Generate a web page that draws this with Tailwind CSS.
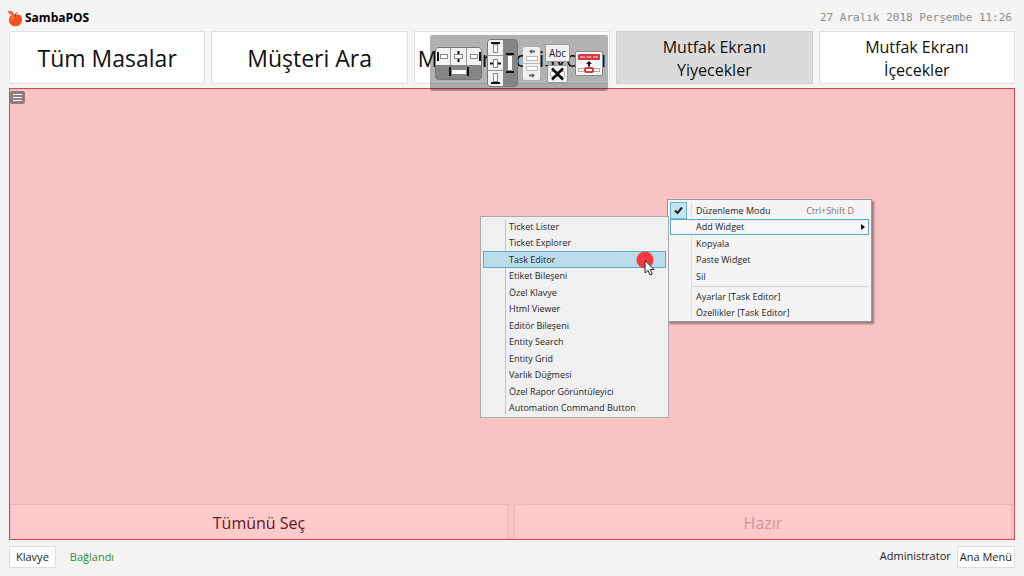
<!DOCTYPE html>
<html lang="tr">

<head>
  <meta charset="utf-8">
  <meta name="viewport" content="width=device-width, initial-scale=1">
  <title>SambaPOS</title>
  <script src="https://cdn.jsdelivr.net/npm/@tailwindcss/browser@4"></script>
</head>

<body class="relative flex flex-col min-h-screen px-[9px] bg-[#f4f4f4] text-[#1e1e1e] font-['Open_Sans','Noto_Sans',sans-serif]">

  <header class="flex items-center justify-between h-[31px] pt-[5px] pr-[3px]">
    <h1 class="flex items-center gap-px text-[12px] font-bold text-black">
      <svg class="-ml-0.5 size-[17px]" viewBox="0 0 17 17" aria-hidden="true">
        <path d="M8 5.200C10 3.800 15 4 15 9.300C15 13.500 12.300 16.300 8.700 16.300S2 13.800 2 9.700C2 6.300 4.400 4.300 8 5.200Z" fill="#f4511e" />
        <path d="M4 7.500C5.500 6 7.200 6.500 7.500 7.600C6 8 4.500 9.300 4 11Z" fill="#ff8a50" />
        <path d="M.8 1C3.500.2 6.800 1.200 7.400 4.900C4.500 6 1.800 4.600.8 1Z" fill="#f0683c" />
        <path d="M8 6.500C8 4.500 9 3 10.200 2.300" fill="none" stroke="#8a2c12" />
      </svg>
      SambaPOS
    </h1>
    <time datetime="2018-12-27T11:26" class="font-['DejaVu_Sans_Mono',monospace] text-[11px] text-[#8c8c8c]">27 Aralık 2018 Perşembe 11:26</time>
  </header>

  <nav class="grid grid-cols-5 gap-[6px] h-[53px] text-[23px] leading-[23px] text-[#111]">
    <button class="pt-[2px] bg-white border border-[#e2e2e2]">Tüm Masalar</button>
    <button class="pt-[2px] bg-white border border-[#e2e2e2]">Müşteri Ara</button>
    <button class="pt-[2px] bg-white border border-[#e2e2e2] text-[22px] whitespace-nowrap">Müşteri Pozisyonu</button>
    <button class="pt-[2px] bg-[#dbdbdb] border border-[#cfcfcf] text-[16px]">Mutfak Ekranı<br>Yiyecekler</button>
    <button class="pt-[2px] bg-white border border-[#e2e2e2] text-[16px]">Mutfak Ekranı<br>İçecekler</button>
  </nav>

  <main class="flex flex-col flex-1 justify-between mt-1 bg-[#f7c3c3] border border-[#cf4a50]">
    <button aria-label="Menü" class="flex items-center justify-center mt-[2px] w-[15px] h-[13px] rounded-xs bg-[#8f7c7c]">
      <svg class="w-[11px] h-[9px]" viewBox="0 0 11 9" stroke="#fff" stroke-width="1"><path d="M1 1.500H10M1 4.500H10M1 7.500H10" /></svg>
    </button>
    <div class="grid grid-cols-2 gap-[6px] h-[35px] pr-[2px] text-[16px]">
      <button class="pt-[2px] bg-[#ffcaca] border border-b-0 border-[#efb5b5] text-[#5a1c22]">Tümünü Seç</button>
      <button class="pt-[2px] bg-[#ffcaca] border border-b-0 border-[#efb5b5] text-[#cf9496]">Hazır</button>
    </div>
  </main>

  <footer class="flex items-center h-[36px] pb-[3px] text-[11px]">
    <button class="h-[22px] px-[6px] pt-[2px] bg-white border border-[#dcdcdc]">Klavye</button>
    <span class="ml-[14px] pt-[2px] text-[#2f8f37]">Bağlandı</span>
    <span class="ml-auto mr-[6px]">Administrator</span>
    <button class="h-[22px] px-[2px] pt-[2px] bg-white border border-[#dcdcdc]">Ana Menü</button>
  </footer>

  <!-- Floating layout toolbar -->
  <div role="toolbar" class="absolute left-[430px] top-[35px] flex items-center gap-[5px] h-[56px] px-[5px] rounded-xs bg-black/30">
    <div class="w-[47px] rounded-sm overflow-hidden bg-[#858585] border border-[#777]">
      <div class="grid grid-cols-3 gap-px h-[17px] bg-[#999]">
        <button aria-label="Sola hizala" class="bg-[#f3f3f3]"><svg class="mx-auto size-[15px]" viewBox="0 0 15 15" fill="#fff"><path d="M2 3V12" stroke="#111" stroke-width="2" /><rect x="4.500" y="5.500" width="7" height="4" stroke="#888" /></svg></button>
        <button aria-label="Yatay ortala" class="bg-[#f3f3f3]"><svg class="mx-auto size-[15px]" viewBox="0 0 15 15" fill="#fff"><path d="M7.500 2V13" stroke="#111" stroke-width="2" /><rect x="3.500" y="5.500" width="8" height="4" stroke="#888" /></svg></button>
        <button aria-label="Sağa hizala" class="bg-[#f3f3f3]"><svg class="mx-auto size-[15px]" viewBox="0 0 15 15" fill="#fff"><path d="M13 3V12" stroke="#111" stroke-width="2" /><rect x="3.500" y="5.500" width="7" height="4" stroke="#888" /></svg></button>
      </div>
      <button aria-label="Genişliği eşitle" class="block w-full h-[14px]"><svg class="mx-auto w-[22px] h-[11px]" viewBox="0 0 22 11"><path d="M2 1V10M20 1V10" stroke="#111" stroke-width="2" /><rect x="4" y="4" width="14" height="4" fill="#fff" /></svg></button>
    </div>
    <div class="flex w-[31px] h-[48px] rounded-sm overflow-hidden bg-[#858585] border border-[#777]">
      <div class="grid grid-rows-3 gap-px w-[15px] bg-[#999]">
        <button aria-label="Üste hizala" class="bg-[#f3f3f3]"><svg class="size-[15px]" viewBox="0 0 15 15" fill="#fff"><path d="M3 3H12" stroke="#111" stroke-width="2" /><rect x="5.500" y="4.500" width="4" height="8" stroke="#888" /></svg></button>
        <button aria-label="Dikey ortala" class="bg-[#f3f3f3]"><svg class="size-[15px]" viewBox="0 0 15 15" fill="#fff"><path d="M2 7.500H13" stroke="#111" stroke-width="2" /><rect x="5.500" y="3.500" width="4" height="8" stroke="#888" /></svg></button>
        <button aria-label="Alta hizala" class="bg-[#f3f3f3]"><svg class="size-[15px]" viewBox="0 0 15 15" fill="#fff"><path d="M3 12H12" stroke="#111" stroke-width="2" /><rect x="5.500" y="2.500" width="4" height="8" stroke="#888" /></svg></button>
      </div>
      <button aria-label="Yüksekliği eşitle" class="flex-1"><svg class="mx-auto w-[10px] h-[22px]" viewBox="0 0 10 22"><path d="M1 2H9M1 20H9" stroke="#111" stroke-width="2" /><rect x="3" y="4" width="4" height="14" fill="#fff" /></svg></button>
    </div>
    <div class="grid gap-px w-[17px] h-[33px] rounded-xs overflow-hidden bg-[#bbb]">
      <button aria-label="Sola taşı" class="bg-[#f0f0f0]"><svg class="w-[17px] h-[16px]" viewBox="0 0 17 16"><path d="M6 4.500L9 2V3.500H12V5.500H9V7Z" fill="#666" /><rect x="3.500" y="9.500" width="11" height="4" fill="#fff" stroke="#bbb" /></svg></button>
      <button aria-label="Sağa taşı" class="bg-[#f0f0f0]"><svg class="w-[17px] h-[16px]" viewBox="0 0 17 16"><rect x="3.500" y="2.500" width="11" height="4" fill="#fff" stroke="#bbb" /><path d="M12 11.500L9 9V10.500H6V12.500H9V14Z" fill="#666" /></svg></button>
    </div>
    <div class="flex flex-col items-center gap-[3px]">
      <button class="w-[25px] h-[18px] rounded-xs bg-[#f1f1f1] border border-[#999] text-[10px] leading-[16px]">Abc</button>
      <button aria-label="Boyutu sıfırla" class="w-[21px] h-[18px] rounded-xs bg-[#f1f1f1] border border-[#999]"><svg class="w-[19px] h-[16px]" viewBox="0 0 19 16"><rect x="2.500" y="5.500" width="14" height="5" rx="1" fill="#fff" stroke="#aaa" /><path d="M4 2.500L15 13.500M15 2.500L4 13.500" stroke="#111" stroke-width="2.500" /></svg></button>
    </div>
    <button aria-label="Satırı birleştir" class="w-[28px] h-[25px] rounded-xs bg-[#f6f6f6] border border-[#888]"><svg class="w-[26px] h-[23px]" viewBox="0 0 26 23">
        <rect x="2" y="2" width="22" height="6" rx="1" fill="#d83a40" />
        <path d="M4 5H9M10.500 5H15.500M17 5H22" stroke="#fff" stroke-width="1.500" stroke-opacity=".6" />
        <path d="M13 9L16 12H14V14.500H12V12H10Z" fill="#111" />
        <rect x="2.500" y="16.500" width="21" height="3" fill="#fff" stroke="#aaa" />
        <rect x="9" y="16" width="8" height="4" rx="1.500" fill="#fff" stroke="#d83a40" stroke-width="2" />
      </svg></button>
  </div>

  <!-- Context menu -->
  <div role="menu" class="absolute left-[667px] top-[199px] w-[205px] px-[2px] pt-[2px] bg-[#f4f4f4] border border-[#999] shadow-[2px_2px_2px_#00000060] text-[9px]">
    <div class="absolute left-[23px] inset-y-[2px] w-px bg-[#dedede]"></div>
    <div class="relative grid grid-rows-5 h-[83px]">
      <label class="flex items-center pr-[15px]">
        <input type="checkbox" checked class="appearance-none w-[17px] h-full bg-[#c4e2ef] border border-[#6cb4d4]">
        <svg class="-ml-[13px] mr-[13px] size-[9px]" viewBox="0 0 9 9" fill="none" stroke="#222" stroke-width="2"><path d="M1 4.500L3.500 7L8 1.500" /></svg>
        Düzenleme Modu
        <span class="ml-auto text-[#777]">Ctrl+Shift D</span>
      </label>
      <button role="menuitem" aria-haspopup="true" class="flex items-center justify-between pl-[25px] pr-[3px] border border-[#5aaccc] bg-[#f6f6f6]">
        Add Widget
        <svg class="w-[4px] h-[6px]" viewBox="0 0 4 6"><path d="M0 0L4 3L0 6Z" fill="#111" /></svg>
      </button>
      <button role="menuitem" class="pl-[26px] text-left">Kopyala</button>
      <button role="menuitem" class="pl-[26px] text-left">Paste Widget</button>
      <button role="menuitem" class="pl-[26px] text-left">Sil</button>
    </div>
    <hr class="relative ml-[23px] mt-px mb-px border-[#d5d5d5]">
    <div class="grid grid-rows-2 h-[33px]">
      <button role="menuitem" class="pl-[26px] text-left">Ayarlar [Task Editor]</button>
      <button role="menuitem" class="pl-[26px] text-left">Özellikler [Task Editor]</button>
    </div>
  </div>

  <!-- Add Widget submenu -->
  <div role="menu" class="absolute left-[480px] top-[216px] w-[189px] px-[2px] pt-px pb-px bg-[#f0f0f0] border border-[#aaa] text-[9px]">
    <div class="absolute left-[24px] inset-y-[3px] w-px bg-[#c4c4c4]"></div>
    <div class="relative grid grid-rows-12 h-[198px]">
      <button role="menuitem" class="pl-[26px] text-left">Ticket Lister</button>
      <button role="menuitem" class="pl-[26px] text-left">Ticket Explorer</button>
      <button role="menuitem" class="pl-[25px] text-left bg-[#bddcea] border border-[#5aaccc]">Task Editor</button>
      <button role="menuitem" class="pl-[26px] text-left">Etiket Bileşeni</button>
      <button role="menuitem" class="pl-[26px] text-left">Özel Klavye</button>
      <button role="menuitem" class="pl-[26px] text-left">Html Viewer</button>
      <button role="menuitem" class="pl-[26px] text-left">Editör Bileşeni</button>
      <button role="menuitem" class="pl-[26px] text-left">Entity Search</button>
      <button role="menuitem" class="pl-[26px] text-left">Entity Grid</button>
      <button role="menuitem" class="pl-[26px] text-left">Varlık Düğmesi</button>
      <button role="menuitem" class="pl-[26px] text-left">Özel Rapor Görüntüleyici</button>
      <button role="menuitem" class="pl-[26px] text-left">Automation Command Button</button>
    </div>
  </div>

  <!-- Click marker and pointer -->
  <svg class="absolute left-[636px] top-[251px] w-[20px] h-[26px] pointer-events-none" viewBox="0 0 20 26" aria-hidden="true">
    <circle cx="9" cy="9" r="8.500" fill="#f5383f" />
    <path d="M9 9.500V22L12 19.300L14 24L16.300 23L14.300 18.500H18.200Z" fill="#fff" stroke="#222" />
  </svg>

</body>

</html>
